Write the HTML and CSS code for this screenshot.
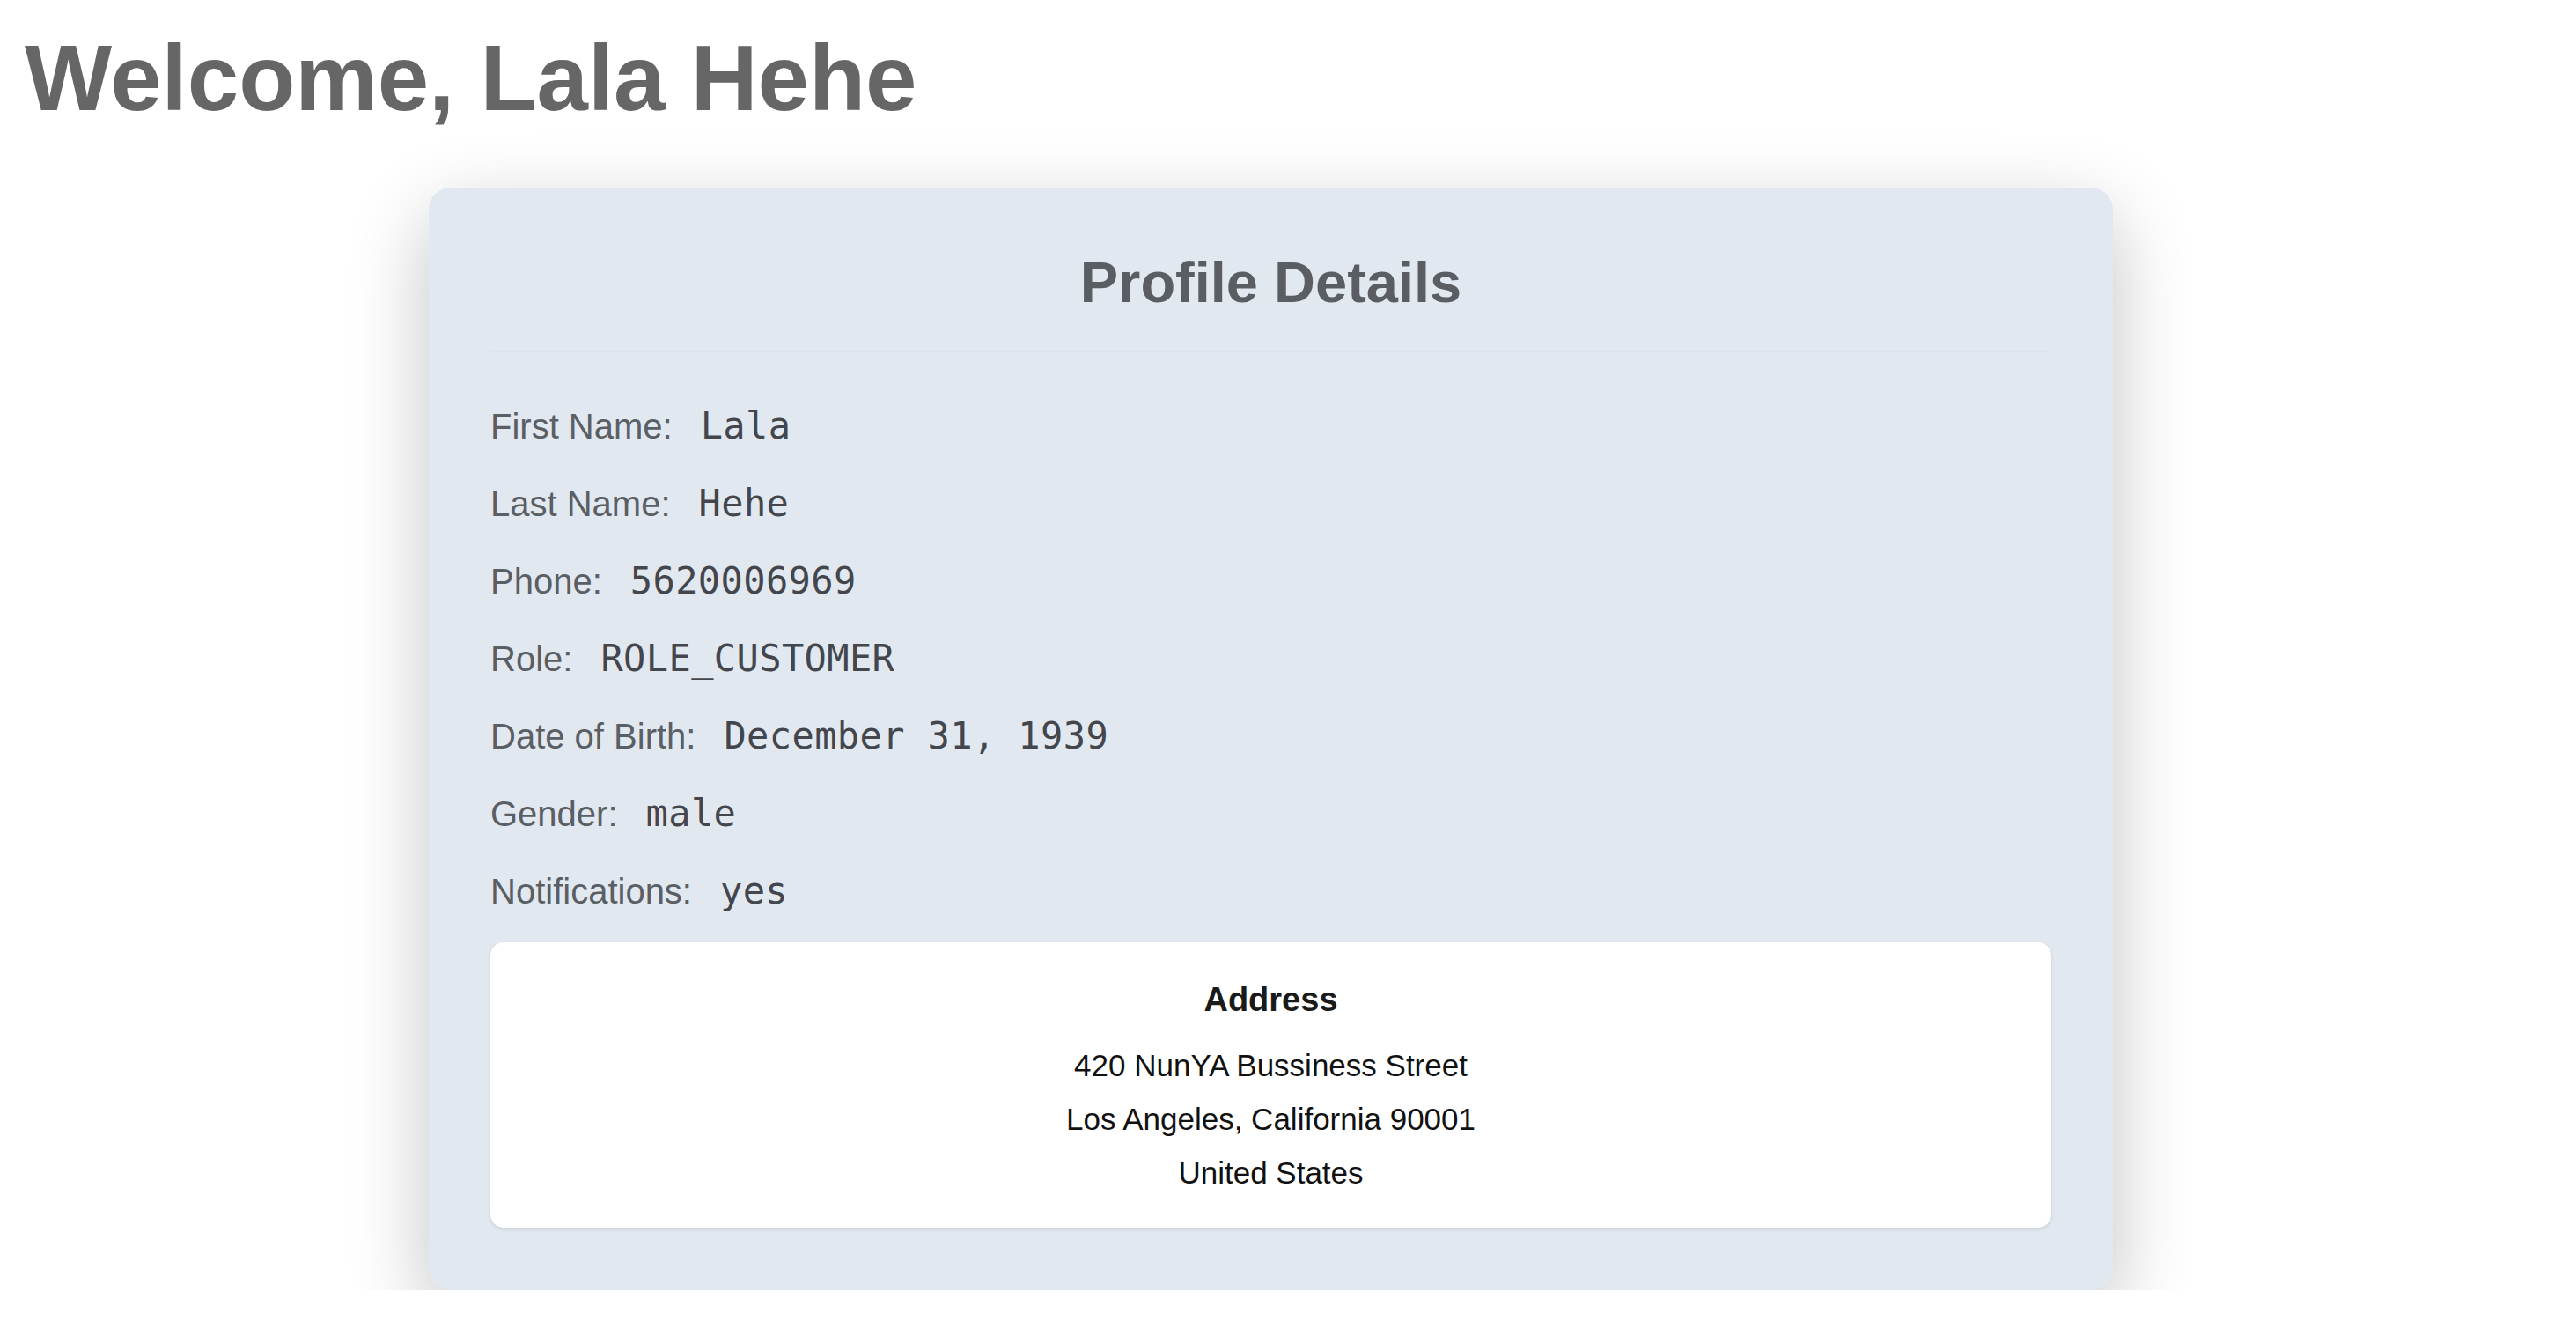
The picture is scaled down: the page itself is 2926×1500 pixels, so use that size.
FILE: index.html
```html
<!DOCTYPE html>
<html lang="en">
<head>
    <meta charset="UTF-8">
    <meta name="viewport" content="width=device-width, initial-scale=1.0">
    <title>Profile</title>
    <link rel="stylesheet" href="styles.css">
</head>
<body>
    <div class="page">
        <h1>Welcome, Lala Hehe</h1>

        <div class="profile-card">
            <h2 class="profile-title">Profile Details</h2>

            <div class="details">
                <div class="row">
                    <span class="label">First Name:</span>
                    <span class="value">Lala</span>
                </div>
                <div class="row">
                    <span class="label">Last Name:</span>
                    <span class="value">Hehe</span>
                </div>
                <div class="row">
                    <span class="label">Phone:</span>
                    <span class="value">5620006969</span>
                </div>
                <div class="row">
                    <span class="label">Role:</span>
                    <span class="value">ROLE_CUSTOMER</span>
                </div>
                <div class="row">
                    <span class="label">Date of Birth:</span>
                    <span class="value">December 31, 1939</span>
                </div>
                <div class="row">
                    <span class="label">Gender:</span>
                    <span class="value">male</span>
                </div>
                <div class="row">
                    <span class="label">Notifications:</span>
                    <span class="value">yes</span>
                </div>
            </div>

            <div class="address">
                <h3>Address</h3>
                <p>420 NunYA Bussiness Street</p>
                <p>Los Angeles, California 90001</p>
                <p>United States</p>
            </div>
        </div>
    </div>
</body>
</html>
```

FILE: styles.css
```css
body {
    margin: 0;
    font-family: "Liberation Sans", Arial, sans-serif;
    background-color: #fff;
}
.page {
    padding: 29px 28px 0 28px;
}
h1 {
    margin: 0;
    font-size: 105px;
    line-height: 1.15;
    font-weight: bold;
    color: #666666;
}
.profile-card {
    box-sizing: border-box;
    width: 1913px;
    margin: 63px 0 0 459px;
    padding: 71px 70px 71px 70px;
    background-color: #e2e8f0;
    border-radius: 25px;
    box-shadow: 0 30px 90px rgba(0, 0, 0, 0.24);
}
.profile-title {
    margin: 0;
    padding-bottom: 39px;
    border-bottom: 2px solid #dfe3e9;
    font-size: 65px;
    line-height: 1.15;
    text-align: center;
    color: #5a5e63;
}
.details {
    display: flex;
    flex-direction: column;
    gap: 40px;
    margin-top: 60px;
}
.row {
    display: flex;
    align-items: baseline;
    gap: 32px;
    height: 48px;
    line-height: 48px;
}
.label {
    font-size: 40px;
    color: #5a5f66;
}
.value {
    font-family: "DejaVu Sans Mono", monospace;
    font-size: 42px;
    letter-spacing: 0.4px;
    color: #43474d;
}
.address {
    margin-top: 34px;
    padding: 44px 20px 32px 20px;
    background-color: #fff;
    border-radius: 15px;
    box-shadow: 0 2px 4px rgba(0, 0, 0, 0.1);
    text-align: center;
}
.address h3 {
    margin: 0 0 22px 0;
    font-size: 38px;
    line-height: 1.15;
    color: #1a1a1a;
}
.address p {
    margin: 0;
    font-size: 35px;
    line-height: 61px;
    color: #111;
}
```
